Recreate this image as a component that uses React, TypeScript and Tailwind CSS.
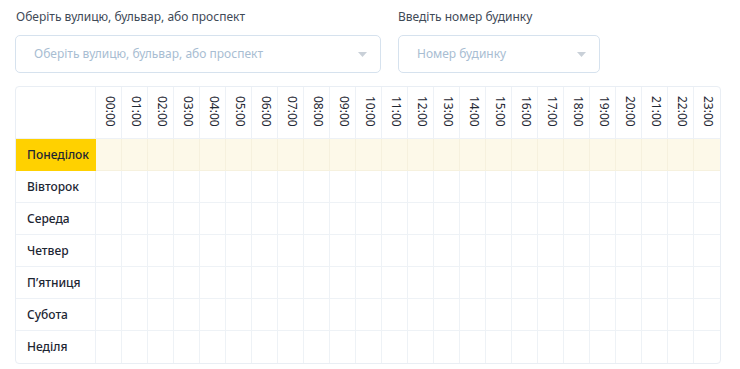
import React from "react";

const hours = Array.from({ length: 24 }, (_, i) => `${String(i).padStart(2, "0")}:00`);
const days = ["Понеділок", "Вівторок", "Середа", "Четвер", "П’ятниця", "Субота", "Неділя"];

function Caret() {
  return (
    <svg width="9" height="5" viewBox="0 0 9 5" className="shrink-0">
      <path d="M0 0 L9 0 L4.5 5 Z" fill="#c9d0d8" />
    </svg>
  );
}

export default function App() {
  return (
    <div className="w-[740px] h-[369px] bg-white overflow-hidden" style={{ fontFamily: '"Noto Sans", "Open Sans", sans-serif' }}>
      <div className="flex pl-[15px] pt-[8px] gap-[17px]">
        <div className="flex flex-col w-[366px]">
          <div className="text-[12px] leading-[18px] text-[#3f4a57] pl-[1px]">Оберіть вулицю, бульвар, або проспект</div>
          <div className="mt-[9px] h-[38px] border border-[#d6e2ee] rounded-[5px] flex items-center justify-between pl-[18px] pr-[13px]">
            <span className="text-[12px] text-[#a8bdd2]">Оберіть вулицю, бульвар, або проспект</span>
            <Caret />
          </div>
        </div>
        <div className="flex flex-col w-[202px]">
          <div className="text-[12px] leading-[18px] text-[#3f4a57]">Введіть номер будинку</div>
          <div className="mt-[9px] h-[38px] border border-[#d6e2ee] rounded-[5px] flex items-center justify-between pl-[18px] pr-[13px]">
            <span className="text-[12px] text-[#a8bdd2]">Номер будинку</span>
            <Caret />
          </div>
        </div>
      </div>
      <div className="ml-[15px] mt-[13px] w-[706px] border border-[#e9eef4] rounded-[4px] overflow-hidden">
        <div className="grid grid-cols-[80px_repeat(24,26px)]">
          <div className="h-[52px] border-r border-b border-[#edf1f6]" />
          {hours.map((h, i) => (
            <div
              key={h}
              className={`h-[52px] border-b border-[#edf1f6] flex justify-center pt-[9px] ${i < 23 ? "border-r" : ""}`}
            >
              <span
                className="text-[12px] leading-[14px] text-[#1f2833] pl-[2px]"
                style={{ writingMode: "vertical-rl", fontFamily: '"Noto Sans", sans-serif' }}
              >
                {h}
              </span>
            </div>
          ))}
          {days.map((d, r) => (
            <React.Fragment key={d}>
              <div
                className={`h-[32px] flex items-center pl-[11px] text-[12px] font-medium text-[#1d2633] border-r border-[#edf1f6] ${r < 6 ? "border-b" : ""} ${r === 0 ? "bg-[#ffd100] border-[#ffd100]" : ""}`}
              >
                {d}
              </div>
              {hours.map((h, i) => (
                <div
                  key={h}
                  className={`h-[32px] border-[#eef2f6] ${i < 23 ? "border-r" : ""} ${r < 6 ? "border-b" : ""} ${r === 0 ? "bg-[#fdf9e9] border-[#f6f1de]" : ""}`}
                />
              ))}
            </React.Fragment>
          ))}
        </div>
      </div>
    </div>
  );
}
